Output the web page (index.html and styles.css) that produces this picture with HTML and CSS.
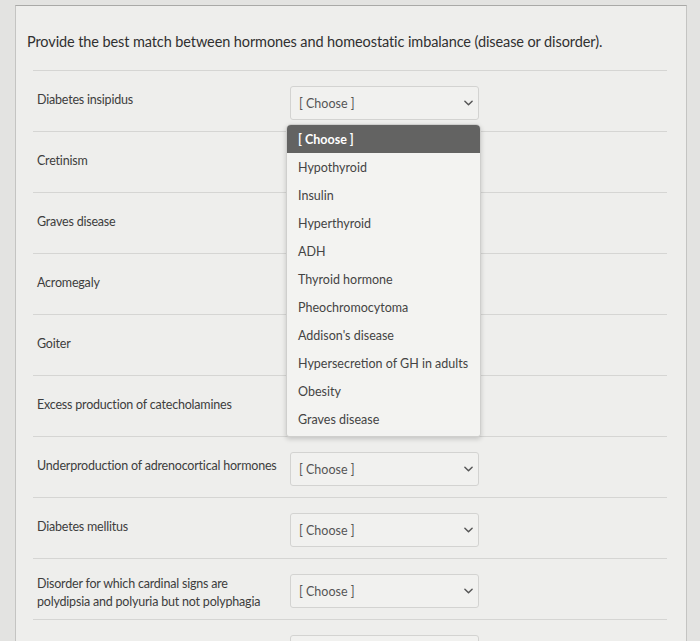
FILE: index.html
```html
<!DOCTYPE html>
<html>
<head>
<meta charset="utf-8">
<link rel="stylesheet" href="styles.css">
</head>
<body>
<div class="page">
  <div class="card">
    <p class="question">Provide the best match between hormones and homeostatic imbalance (disease or disorder).</p>
    <div class="rows">
      <div class="row">
        <div class="label">Diabetes insipidus</div>
        <div class="select-wrap">
          <div class="select"><span>[ Choose ]</span><svg class="chev" viewBox="0 0 10 6" width="9" height="6"><path d="M1 1 L5 5 L9 1" fill="none" stroke="#555" stroke-width="1.6" stroke-linecap="round" stroke-linejoin="round"/></svg></div>
          <ul class="menu">
            <li class="active">[ Choose ]</li>
            <li>Hypothyroid</li>
            <li>Insulin</li>
            <li>Hyperthyroid</li>
            <li>ADH</li>
            <li>Thyroid hormone</li>
            <li>Pheochromocytoma</li>
            <li>Addison's disease</li>
            <li>Hypersecretion of GH in adults</li>
            <li>Obesity</li>
            <li>Graves disease</li>
          </ul>
        </div>
      </div>
      <div class="row">
        <div class="label">Cretinism</div>
        <div class="select-wrap"><div class="select"><span>[ Choose ]</span><svg class="chev" viewBox="0 0 10 6" width="9" height="6"><path d="M1 1 L5 5 L9 1" fill="none" stroke="#555" stroke-width="1.6" stroke-linecap="round" stroke-linejoin="round"/></svg></div></div>
      </div>
      <div class="row">
        <div class="label">Graves disease</div>
        <div class="select-wrap"><div class="select"><span>[ Choose ]</span><svg class="chev" viewBox="0 0 10 6" width="9" height="6"><path d="M1 1 L5 5 L9 1" fill="none" stroke="#555" stroke-width="1.6" stroke-linecap="round" stroke-linejoin="round"/></svg></div></div>
      </div>
      <div class="row">
        <div class="label">Acromegaly</div>
        <div class="select-wrap"><div class="select"><span>[ Choose ]</span><svg class="chev" viewBox="0 0 10 6" width="9" height="6"><path d="M1 1 L5 5 L9 1" fill="none" stroke="#555" stroke-width="1.6" stroke-linecap="round" stroke-linejoin="round"/></svg></div></div>
      </div>
      <div class="row">
        <div class="label">Goiter</div>
        <div class="select-wrap"><div class="select"><span>[ Choose ]</span><svg class="chev" viewBox="0 0 10 6" width="9" height="6"><path d="M1 1 L5 5 L9 1" fill="none" stroke="#555" stroke-width="1.6" stroke-linecap="round" stroke-linejoin="round"/></svg></div></div>
      </div>
      <div class="row">
        <div class="label">Excess production of catecholamines</div>
        <div class="select-wrap"><div class="select"><span>[ Choose ]</span><svg class="chev" viewBox="0 0 10 6" width="9" height="6"><path d="M1 1 L5 5 L9 1" fill="none" stroke="#555" stroke-width="1.6" stroke-linecap="round" stroke-linejoin="round"/></svg></div></div>
      </div>
      <div class="row">
        <div class="label">Underproduction of adrenocortical hormones</div>
        <div class="select-wrap"><div class="select"><span>[ Choose ]</span><svg class="chev" viewBox="0 0 10 6" width="9" height="6"><path d="M1 1 L5 5 L9 1" fill="none" stroke="#555" stroke-width="1.6" stroke-linecap="round" stroke-linejoin="round"/></svg></div></div>
      </div>
      <div class="row">
        <div class="label">Diabetes mellitus</div>
        <div class="select-wrap"><div class="select"><span>[ Choose ]</span><svg class="chev" viewBox="0 0 10 6" width="9" height="6"><path d="M1 1 L5 5 L9 1" fill="none" stroke="#555" stroke-width="1.6" stroke-linecap="round" stroke-linejoin="round"/></svg></div></div>
      </div>
      <div class="row">
        <div class="label label-two">Disorder for which cardinal signs are polydipsia and polyuria but not polyphagia</div>
        <div class="select-wrap"><div class="select"><span>[ Choose ]</span><svg class="chev" viewBox="0 0 10 6" width="9" height="6"><path d="M1 1 L5 5 L9 1" fill="none" stroke="#555" stroke-width="1.6" stroke-linecap="round" stroke-linejoin="round"/></svg></div></div>
      </div>
      <div class="row">
        <div class="label">Disorder involving a tropic hormone and a target gland</div>
        <div class="select-wrap"><div class="select"><span>[ Choose ]</span><svg class="chev" viewBox="0 0 10 6" width="9" height="6"><path d="M1 1 L5 5 L9 1" fill="none" stroke="#555" stroke-width="1.6" stroke-linecap="round" stroke-linejoin="round"/></svg></div></div>
      </div>
    </div>
  </div>
</div>
</body>
</html>
```

FILE: styles.css
```css
html, body {
  margin: 0;
  padding: 0;
  height: 100%;
  overflow: hidden;
}
body {
  background: #e3e3e1;
  font-family: Lato, "Open Sans", "Liberation Sans", sans-serif;
  color: #3b3b3b;
}
.page {
  padding-top: 5px;
  padding-left: 15px;
  width: 672px;
}
.card {
  background: #eeeeec;
  border-top: 1px solid #a9a9a7;
  border-left: 1px solid #c4c4c2;
  border-right: 1px solid #c4c4c2;
  min-height: 640px;
  padding: 25px 0 0 0;
}
.question {
  margin: 0 0 18px 11px;
  font-size: 14.5px;
  line-height: 21px;
  color: #303030;
  letter-spacing: -0.1px;
}
.rows {
  margin-left: 17px;
  width: 634px;
}
.row {
  display: flex;
  align-items: flex-start;
  border-top: 1px solid #d5d5d3;
  padding: 15px 0 11px 4px;
}
.label {
  box-sizing: border-box;
  flex: 0 0 253px;
  padding: 5px 9px 0 0;
  margin-bottom: -9px;
  font-size: 12.5px;
  line-height: 18px;
  color: #3d3d3d;
  letter-spacing: -0.2px;
}
.label-two {
  padding-top: 1px;
}
.select-wrap {
  position: relative;
  width: 189px;
}
.select {
  box-sizing: border-box;
  height: 34px;
  border: 1px solid #d3d3d1;
  border-radius: 3px;
  background: #f1f1ef;
  display: flex;
  align-items: center;
  justify-content: space-between;
  padding: 0 5px 0 8px;
  font-size: 12.5px;
  color: #555;
}
.chev {
  display: block;
}
.menu {
  position: absolute;
  top: 38px;
  left: -4px;
  width: 193px;
  margin: 0;
  padding: 0 0 3px 0;
  list-style: none;
  background: #f3f3f1;
  border: 1px solid #cfcfcd;
  border-radius: 5px 5px 3px 3px;
  box-shadow: 0 2px 5px rgba(0,0,0,0.18);
  z-index: 5;
  overflow: hidden;
}
.menu li {
  height: 28px;
  line-height: 29px;
  padding-left: 11px;
  font-size: 12.5px;
  color: #444;
  white-space: nowrap;
}
.menu li.active {
  background: #636362;
  color: #fff;
  font-weight: 700;
}
```
